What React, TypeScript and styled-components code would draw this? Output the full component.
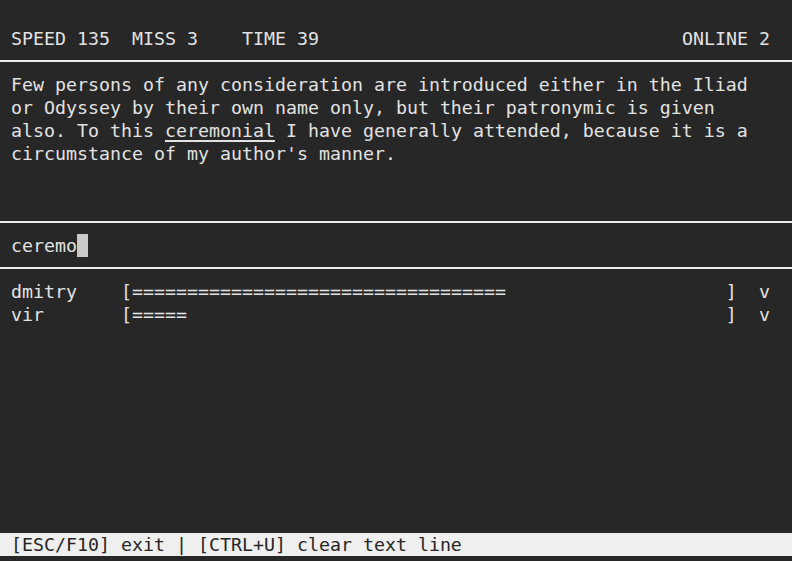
import React from "react";
import styled, { createGlobalStyle } from "styled-components";

const CELL_W = 11;
const CELL_H = 23;
const BG = "#272727";
const FG = "#e2e2e2";

const GlobalStyle = createGlobalStyle`
  html, body { margin: 0; padding: 0; background: ${BG}; }
  * { box-sizing: border-box; }
`;

const Terminal = styled.div`
  width: 792px;
  height: 561px;
  padding: 4px 0 5px;
  display: flex;
  flex-direction: column;
  background: ${BG};
  color: ${FG};
  font-family: "DejaVu Sans Mono", "Liberation Mono", monospace;
  font-size: 18.27px;
  line-height: ${CELL_H}px;
  white-space: pre;
  overflow: hidden;
`;

const Header = styled.div`
  display: flex;
  justify-content: space-between;
  height: ${CELL_H * 2}px;
  padding: ${CELL_H}px ${CELL_W * 2}px 0 ${CELL_W}px;
`;

const Separator = styled.div`
  height: ${CELL_H}px;
  padding-top: 10px;
  &::before {
    content: "";
    display: block;
    height: 2px;
    background: #ececec;
  }
`;

const Passage = styled.div<{ $rows: number }>`
  height: ${(p) => p.$rows * CELL_H}px;
  padding: 0 ${CELL_W}px;
`;

const Typed = styled.span`
  text-decoration: underline;
  text-decoration-thickness: 1.5px;
  text-underline-offset: 3px;
`;

const InputLine = styled.div`
  height: ${CELL_H}px;
  padding-left: ${CELL_W}px;
  display: flex;
`;

const Cursor = styled.span`
  display: inline-block;
  width: ${CELL_W}px;
  height: ${CELL_H}px;
  background: #c9c9c9;
`;

const PlayerList = styled.div`
  display: flex;
  flex-direction: column;
`;

const PlayerRow = styled.div`
  display: flex;
  height: ${CELL_H}px;
  padding-left: ${CELL_W}px;
`;

const Name = styled.span`
  width: ${CELL_W * 10}px;
`;

const Track = styled.span`
  width: ${CELL_W * 56}px;
`;

const Mark = styled.span`
  margin-left: ${CELL_W * 2}px;
`;

const StatusBar = styled.div`
  margin-top: auto;
  height: ${CELL_H}px;
  padding-left: ${CELL_W}px;
  background: #efefef;
  color: #262626;
`;

const players = [
  { name: "dmitry", progress: 34 },
  { name: "vir", progress: 5 },
];

const TRACK_LEN = 54;

export default function App() {
  return (
    <>
      <GlobalStyle />
      <Terminal>
        <Header>
          <span>{"SPEED 135  MISS 3    TIME 39"}</span>
          <span>ONLINE 2</span>
        </Header>
        <Separator />
        <Passage $rows={6}>
          {"Few persons of any consideration are introduced either in the Iliad\n"}
          {"or Odyssey by their own name only, but their patronymic is given\n"}
          {"also. To this "}
          <Typed>ceremonial</Typed>
          {" I have generally attended, because it is a\n"}
          {"circumstance of my author's manner."}
        </Passage>
        <Separator />
        <InputLine>
          <span>ceremo</span>
          <Cursor />
        </InputLine>
        <Separator />
        <PlayerList>
          {players.map((p) => (
            <PlayerRow key={p.name}>
              <Name>{p.name}</Name>
              <Track>{`[${"=".repeat(p.progress).padEnd(TRACK_LEN, " ")}]`}</Track>
              <Mark>v</Mark>
            </PlayerRow>
          ))}
        </PlayerList>
        <StatusBar>{"[ESC/F10] exit | [CTRL+U] clear text line"}</StatusBar>
      </Terminal>
    </>
  );
}
